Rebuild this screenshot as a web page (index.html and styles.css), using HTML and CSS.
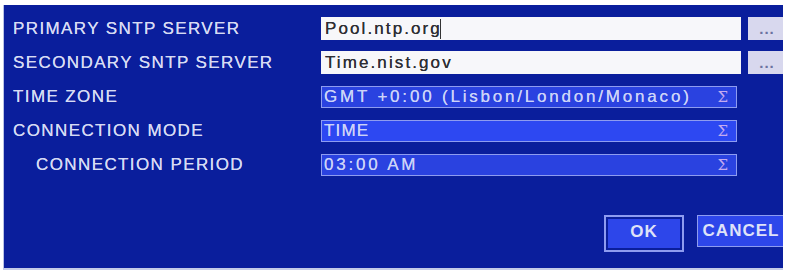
FILE: index.html
```html
<!DOCTYPE html>
<html>
<head>
<meta charset="utf-8">
<link rel="stylesheet" href="styles.css">
</head>
<body>
<div class="panel">
  <div class="rows">
    <div class="row">
      <div class="label">PRIMARY SNTP SERVER</div>
      <div class="value">
        <div class="input">Pool.ntp.org<span class="caret"></span></div>
        <div class="more">...</div>
      </div>
    </div>
    <div class="row">
      <div class="label">SECONDARY SNTP SERVER</div>
      <div class="value">
        <div class="input">Time.nist.gov</div>
        <div class="more">...</div>
      </div>
    </div>
    <div class="row">
      <div class="label">TIME ZONE</div>
      <div class="value">
        <div class="select"><span class="wide">GMT +0:00 (Lisbon/London/Monaco)</span><span class="sigma">Σ</span></div>
      </div>
    </div>
    <div class="row">
      <div class="label">CONNECTION MODE</div>
      <div class="value">
        <div class="select bright"><span>TIME</span><span class="sigma">Σ</span></div>
      </div>
    </div>
    <div class="row">
      <div class="label indent">CONNECTION PERIOD</div>
      <div class="value">
        <div class="select"><span class="wide">03:00 AM</span><span class="sigma">Σ</span></div>
      </div>
    </div>
  </div>
  <div class="actions">
    <div class="btn focus">OK</div>
    <div class="btn cancel">CANCEL</div>
  </div>
</div>
</body>
</html>
```
FILE: styles.css
```css
html, body {
  margin: 0;
  padding: 0;
  background: #ffffff;
}
body {
  width: 787px;
  height: 274px;
  overflow: hidden;
  font-family: "Liberation Sans", Arial, sans-serif;
}
.panel {
  margin: 5px 4px 0 3px;
  height: 265px;
  background: #0a1e9c;
  border-left: 1px solid #b8c2e6;
  border-bottom: 2px solid #c4cce8;
  box-sizing: border-box;
  overflow: hidden;
  display: flex;
  flex-direction: column;
}
.rows {
  display: flex;
  flex-direction: column;
  gap: 11px;
  padding-top: 12px;
}
.row {
  display: grid;
  grid-template-columns: 317px 1fr;
  align-items: center;
  height: 23px;
}
.label {
  padding-left: 9px;
  color: #d6dbf4;
  font-size: 17px;
  letter-spacing: 1.4px;
  white-space: nowrap;
  text-shadow: 0 0 0.6px #d6dbf4;
}
.label.indent {
  padding-left: 32px;
}
.value {
  display: flex;
  align-items: center;
  gap: 7px;
  height: 23px;
}
.input {
  width: 420px;
  height: 23px;
  box-sizing: border-box;
  background: #f7f7fa;
  color: #2e2e34;
  font-size: 17px;
  letter-spacing: 2.1px;
  padding-left: 4px;
  line-height: 23px;
  display: flex;
  align-items: center;
  text-shadow: 0 0 0.6px #2e2e34;
}
.caret {
  display: inline-block;
  width: 1px;
  height: 20px;
  background: #333;
  margin-left: -2px;
}
.more {
  width: 38px;
  height: 23px;
  flex: none;
  background: #d8d8ee;
  color: #6c72a0;
  font-size: 15px;
  font-weight: bold;
  letter-spacing: 1px;
  text-align: center;
  line-height: 23px;
}
.select {
  width: 416px;
  height: 22px;
  box-sizing: border-box;
  background: #2a42e0;
  border: 1px solid #8e9cf0;
  color: #ccd3f8;
  font-size: 17px;
  letter-spacing: 1.2px;
  padding: 0 8px 0 2px;
  display: flex;
  align-items: center;
  justify-content: space-between;
  text-shadow: 0 0 0.6px #ccd3f8;
}
.select .wide {
  letter-spacing: 2.8px;
}
.select.bright {
  background: #2d48f2;
}
.sigma {
  color: #c4aaf0;
  font-family: "DejaVu Serif", serif;
  font-size: 15px;
  letter-spacing: 0;
  text-shadow: none;
}
.actions {
  display: flex;
  justify-content: flex-end;
  align-items: flex-start;
  gap: 13px;
  margin-top: 39px;
  margin-right: -2px;
}
.btn {
  height: 32px;
  box-sizing: border-box;
  background: #2d46ea;
  border: 1px solid #8e9cf0;
  color: #dfe2f8;
  font-size: 17px;
  font-weight: bold;
  letter-spacing: 1px;
  display: flex;
  align-items: center;
  justify-content: center;
  padding: 0 2px;
}
.btn.cancel {
  width: 88px;
}
.btn.focus {
  width: 80px;
  height: 37px;
  border: 2px solid #8e9cf0;
  box-shadow: inset 0 0 0 2px #0a1e9c;
  padding-bottom: 4px;
}
```
